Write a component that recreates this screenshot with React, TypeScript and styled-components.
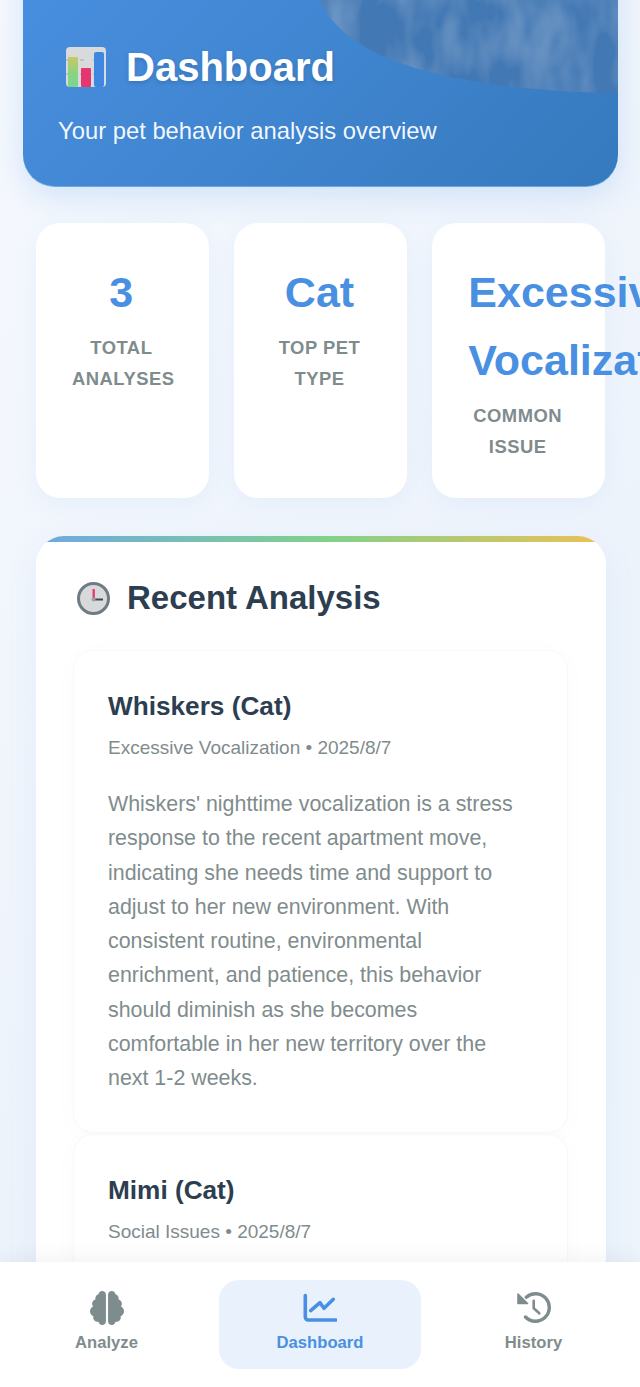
import React from 'react';
import styled, { createGlobalStyle } from 'styled-components';
import { FaBrain } from 'react-icons/fa6';

const GlobalStyle = createGlobalStyle`
  html, body {
    margin: 0;
    padding: 0;
    height: 100%;
    overflow: hidden;
  }
  body {
    font-family: 'Liberation Sans', Arial, sans-serif;
    background: #eef4fb;
  }
`;

const Page = styled.div`
  height: 1387px;
  overflow: hidden;
  position: relative;
  background: linear-gradient(135deg, #f6f9fe 0%, #edf3fb 60%, #eef4fb 100%);
`;

const Content = styled.main`
  margin-top: -60px;
  padding: 0 22px 0 23px;
`;

const Header = styled.header`
  position: relative;
  overflow: hidden;
  height: 247px;
  box-sizing: border-box;
  padding: 107px 35px 0;
  border-radius: 0 0 32px 32px;
  background: linear-gradient(135deg, #4a90e2 0%, #357abd 100%);
  box-shadow: 0 10px 32px rgba(74, 144, 226, 0.2);
  border-bottom: 1px solid #6aa6e6;
  color: #fff;
`;

const HeaderBlob = styled.svg`
  position: absolute;
  top: 60px;
  left: 0;
  width: 595px;
  height: 100px;
`;

const TitleRow = styled.div`
  position: relative;
  display: flex;
  align-items: center;
  gap: 20px;
  padding-left: 8px;
  height: 40px;
`;

const Title = styled.h1`
  margin: 0;
  font-size: 40px;
  line-height: 40px;
  font-weight: 700;
  text-shadow: 0 2px 4px rgba(0, 0, 0, 0.15);
`;

const Subtitle = styled.p`
  position: relative;
  margin: 27px 0 0;
  font-size: 23.8px;
  line-height: 34px;
  color: rgba(255, 255, 255, 0.95);
`;

const StatGrid = styled.section`
  display: grid;
  grid-template-columns: repeat(3, minmax(0, 1fr));
  gap: 25.5px;
  margin: 36px 13px 38px 13px;
`;

const StatCard = styled.div`
  box-sizing: border-box;
  height: 275px;
  padding: 34px 37px 34px 35px;
  border-radius: 24px;
  border: 1px solid rgba(255, 255, 255, 0.9);
  background: #fff;
  text-align: center;
  box-shadow: 0 6px 24px rgba(74, 144, 226, 0.07);
`;

const StatValue = styled.div`
  font-size: 43px;
  line-height: 68px;
  font-weight: 700;
  color: #4a90e2;
`;

const StatLabel = styled.div`
  margin-top: 6px;
  font-size: 18.4px;
  line-height: 31px;
  font-weight: 700;
  letter-spacing: 0.5px;
  text-transform: uppercase;
  color: #7f8c8d;
`;

const RecentPanel = styled.section`
  position: relative;
  overflow: hidden;
  margin: 0 12px 0 13px;
  padding: 40px 38px 0 37px;
  height: 800px;
  border-radius: 28px 28px 0 0;
  background: #fff;
  box-shadow: 0 8px 32px rgba(74, 144, 226, 0.08);
`;

const RainbowBar = styled.div`
  position: absolute;
  top: 0;
  left: 0;
  right: 0;
  height: 6px;
  background: linear-gradient(90deg, #6fa8e4 0%, #7fd18c 50%, #eec055 100%);
`;

const SectionHead = styled.div`
  display: flex;
  align-items: center;
  gap: 17px;
  margin: 0 0 0 4px;
  height: 44px;
`;

const SectionTitle = styled.h2`
  margin: 0;
  font-size: 33px;
  line-height: 44px;
  font-weight: 700;
  color: #2c3e50;
`;

const CardList = styled.div`
  overflow: hidden;
  margin: -3px -15px 0 -15px;
  padding: 33px 15px 0;
`;

const AnalysisCard = styled.article`
  box-sizing: border-box;
  padding: 35px 35px 36px 34px;
  margin-bottom: 1px;
  border-radius: 20px;
  border: 1px solid #f6f8fa;
  background: #fff;
  box-shadow: 0 4px 30px rgba(0, 0, 0, 0.018);
`;

const CardName = styled.h3`
  margin: 0;
  font-size: 26.2px;
  line-height: 40px;
  font-weight: 700;
  color: #2c3e50;
`;

const CardMeta = styled.div`
  margin-top: 7px;
  font-size: 19px;
  line-height: 29px;
  color: #7f8c8d;
`;

const CardBody = styled.p`
  margin: 25px 0 0;
  font-size: 21.4px;
  line-height: 34.3px;
  color: #7f8c8d;
`;

const BottomNav = styled.nav`
  position: absolute;
  left: 0;
  right: 0;
  bottom: 0;
  height: 125px;
  box-sizing: border-box;
  padding: 18px 0;
  display: grid;
  grid-template-columns: 1fr 202px 1fr;
  column-gap: 6px;
  background: #fff;
  box-shadow: 0 -4px 20px rgba(0, 0, 0, 0.05);
`;

const NavItem = styled.div<{ $active?: boolean }>`
  display: flex;
  flex-direction: column;
  align-items: center;
  padding-top: 11px;
  border-radius: 20px;
  font-size: 16.64px;
  line-height: 24px;
  font-weight: 700;
  color: ${props => (props.$active ? '#4a90e2' : '#7f8c8d')};
  background: ${props => (props.$active ? '#e8f1fc' : 'transparent')};

  svg {
    width: 34px;
    height: 34px;
    margin-bottom: 6px;
  }
`;

const ChartEmoji = () => (
  <svg width="40" height="40" viewBox="0 0 40 40" style={{ flexShrink: 0 }}>
    <rect x="0" y="0" width="40" height="40" rx="4" fill="#d9dadb" />
    <path d="M0 13h3M0 27h3M14 13h4M14 27h4M27 13h2M27 27h2" stroke="#a9abae" strokeWidth="1" />
    <defs>
      <linearGradient id="greenBar" x1="0" y1="0" x2="0" y2="1">
        <stop offset="0" stopColor="#c9c766" />
        <stop offset="0.6" stopColor="#84d584" />
        <stop offset="1" stopColor="#7ed58f" />
      </linearGradient>
    </defs>
    <rect x="2" y="10" width="10" height="30" rx="1" fill="url(#greenBar)" />
    <rect x="15" y="21" width="10" height="19" rx="1" fill="#e5376f" />
    <rect x="28" y="5" width="10" height="35" rx="2" fill="#3f87e0" />
  </svg>
);

const ClockEmoji = () => (
  <svg width="33" height="33" viewBox="0 0 33 33" style={{ flexShrink: 0 }}>
    <circle cx="16.5" cy="16.5" r="15" fill="#d8d9db" stroke="#6f7b82" strokeWidth="3" />
    <rect x="15.5" y="7" width="2.4" height="10.5" fill="#ea3a72" />
    <rect x="17" y="16.5" width="9" height="2" fill="#3d4a55" />
    <circle cx="16.5" cy="17.5" r="2" fill="#9aa0a4" />
  </svg>
);

const LineChartIcon = () => (
  <svg viewBox="0 0 34 34" fill="none" stroke="currentColor" strokeLinecap="round" strokeLinejoin="round">
    <path d="M2.3 4.5V26a3 3 0 0 0 3 3H32.7" strokeWidth="3.6" />
    <path d="M7.7 19.7L17 11.7L21 17.3L30.3 8.3" strokeWidth="3.6" />
  </svg>
);

const HistoryIcon = () => (
  <svg viewBox="0 0 34 34" fill="none" stroke="currentColor" strokeLinecap="round" strokeLinejoin="round">
    <path d="M9.3 6.2A13.8 13.8 0 1 1 8.5 26" strokeWidth="3.4" />
    <path d="M1 3v9.5H10.5Z" fill="currentColor" strokeWidth="1.6" />
    <path d="M16.7 9.7V17.3L22.3 22.3" strokeWidth="2.6" />
  </svg>
);

const App: React.FC = () => (
  <>
    <GlobalStyle />
    <Page>
      <Content>
        <Header>
          <HeaderBlob viewBox="0 0 595 100" preserveAspectRatio="none">
            <defs>
              <filter id="mottle" x="0" y="0" width="100%" height="100%">
                <feTurbulence type="fractalNoise" baseFrequency="0.03 0.015" numOctaves="3" seed="4" />
                <feColorMatrix values="0 0 0 0 0.34  0 0 0 0 0.54  0 0 0 0 0.76  0.7 0 0 0 -0.25" />
                <feComposite in2="SourceGraphic" operator="in" />
                <feMerge>
                  <feMergeNode in="SourceGraphic" />
                  <feMergeNode />
                </feMerge>
              </filter>
            </defs>
            <path
              d="M297 0 C 318 52, 400 78, 500 88 C 535 91, 565 93, 595 93 L595 0 Z"
              fill="#4378b4"
              filter="url(#mottle)"
            />
          </HeaderBlob>
          <TitleRow>
            <ChartEmoji />
            <Title>Dashboard</Title>
          </TitleRow>
          <Subtitle>Your pet behavior analysis overview</Subtitle>
        </Header>

        <StatGrid>
          <StatCard>
            <StatValue>3</StatValue>
            <StatLabel>Total Analyses</StatLabel>
          </StatCard>
          <StatCard>
            <StatValue>Cat</StatValue>
            <StatLabel>Top Pet Type</StatLabel>
          </StatCard>
          <StatCard>
            <StatValue>Excessive Vocalization</StatValue>
            <StatLabel>Common Issue</StatLabel>
          </StatCard>
        </StatGrid>

        <RecentPanel>
          <RainbowBar />
          <SectionHead>
            <ClockEmoji />
            <SectionTitle>Recent Analysis</SectionTitle>
          </SectionHead>
          <CardList>
            <AnalysisCard>
              <CardName>Whiskers (Cat)</CardName>
              <CardMeta>Excessive Vocalization • 2025/8/7</CardMeta>
              <CardBody>
                Whiskers' nighttime vocalization is a stress response to the recent apartment move,
                indicating she needs time and support to adjust to her new environment. With
                consistent routine, environmental enrichment, and patience, this behavior should
                diminish as she becomes comfortable in her new territory over the next 1-2 weeks.
              </CardBody>
            </AnalysisCard>
            <AnalysisCard>
              <CardName>Mimi (Cat)</CardName>
              <CardMeta>Social Issues • 2025/8/7</CardMeta>
            </AnalysisCard>
          </CardList>
        </RecentPanel>
      </Content>

      <BottomNav>
        <NavItem>
          <FaBrain />
          Analyze
        </NavItem>
        <NavItem $active>
          <LineChartIcon />
          Dashboard
        </NavItem>
        <NavItem>
          <HistoryIcon />
          History
        </NavItem>
      </BottomNav>
    </Page>
  </>
);

export default App;
